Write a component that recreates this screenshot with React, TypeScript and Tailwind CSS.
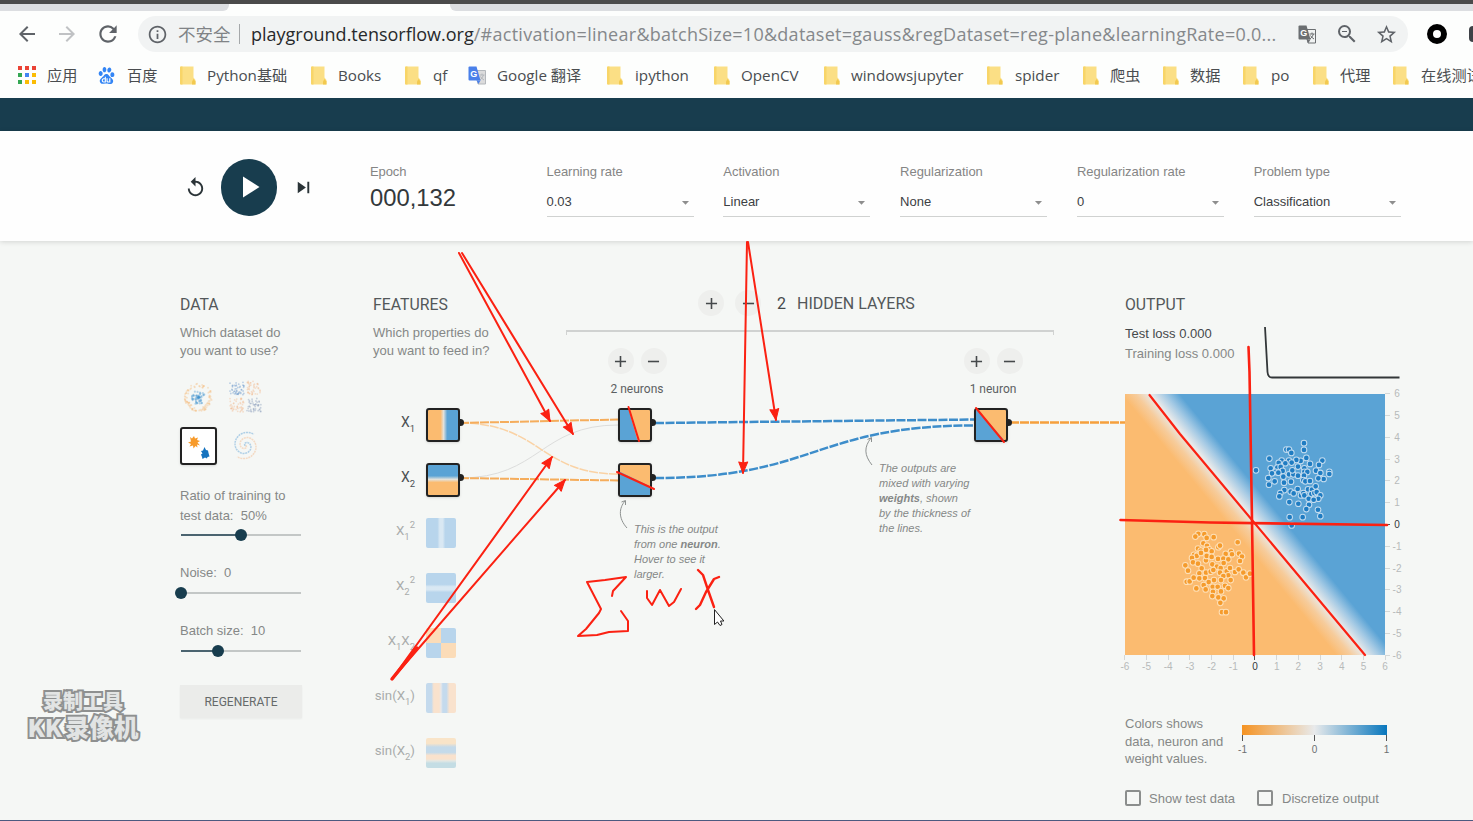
import type { ReactNode } from 'react'
import {
  MdAdd,
  MdArrowBack,
  MdArrowDropDown,
  MdArrowForward,
  MdInfoOutline,
  MdPlayArrow,
  MdRefresh,
  MdRemove,
  MdReplay,
  MdSkipNext,
  MdStarBorder,
  MdZoomOut,
} from 'react-icons/md'
import { SiBaidu } from 'react-icons/si'

const ORANGE = '#fbbb70'
const BLUE = '#5aa3d5'

/* ---------- browser chrome ---------- */

function AppsIcon() {
  const colors = ['#ea4335', '#ea4335', '#ea4335', '#34a853', '#4285f4', '#fbbc04', '#34a853', '#fbbc04', '#fbbc04']
  return (
    <span className="grid grid-cols-3 gap-[3px] w-[18px]">
      {colors.map((c, i) => (
        <span key={i} className="h-1 w-1" style={{ backgroundColor: c }} />
      ))}
    </span>
  )
}

function FolderIcon() {
  return (
    <svg width="16" height="19" viewBox="0 0 16 19">
      <path d="M0 1.5Q0 .5 1 .5h12.500v11l2 2.500v4.500H1q-1 0-1-1z" fill="#fbdf85" />
      <path d="M0 1.500Q0 .5 1 .5h1.500V18.500H1q-1 0-1-1z" fill="#f8d568" />
      <path d="M12 18.500v-3l1.500-2.500 2 2.500v3z" fill="#f2c94f" />
    </svg>
  )
}

function TranslateIcon({ back, page, ink }: { back: string; page: string; ink: string }) {
  return (
    <svg className="shrink-0" width="19" height="19" viewBox="0 0 19 19">
      <path d="M7 4.500h10.500v13.500H10z" fill={page} stroke={ink} strokeWidth="1" />
      <path d="M11.500 9h5M14 7.500V9M15.500 9q-1 3-3.500 5M12.500 10.500q1 2 3.500 3.500" stroke={ink} strokeWidth="1" fill="none" />
      <path d="M1.500.5h7l4 14H1.500q-1 0-1-1v-12q0-1 1-1z" fill={back} />
      <path d="M8.500 14.500h4l-2 3.500z" fill={back} />
      <text x="2.300" y="10.500" fontSize="9" fontWeight="700" fill="#fff" fontFamily="Liberation Sans, sans-serif">
        G
      </text>
    </svg>
  )
}

const bookmarks = [
  { label: '应用', icon: 'apps', w: 'w-[80px]', gap: 'w-[29px]' },
  { label: '百度', icon: 'baidu', w: 'w-[82px]', gap: 'w-[29px]' },
  { label: 'Python基础', icon: 'folder', w: 'w-[131px]', gap: 'w-[27px]' },
  { label: 'Books', icon: 'folder', w: 'w-[94px]', gap: 'w-[27px]' },
  { label: 'qf', icon: 'folder', w: 'w-[63px]', gap: 'w-[28px]' },
  { label: 'Google 翻译', icon: 'translate', w: 'w-[139px]', gap: 'w-[29px]' },
  { label: 'ipython', icon: 'folder', w: 'w-[107px]', gap: 'w-[28px]' },
  { label: 'OpenCV', icon: 'folder', w: 'w-[110px]', gap: 'w-[27px]' },
  { label: 'windowsjupyter', icon: 'folder', w: 'w-[163px]', gap: 'w-[27px]' },
  { label: 'spider', icon: 'folder', w: 'w-[96px]', gap: 'w-[28px]' },
  { label: '爬虫', icon: 'folder', w: 'w-[80px]', gap: 'w-[27px]' },
  { label: '数据', icon: 'folder', w: 'w-[80px]', gap: 'w-[27px]' },
  { label: 'po', icon: 'folder', w: 'w-[70px]', gap: 'w-[28px]' },
  { label: '代理', icon: 'folder', w: 'w-[80px]', gap: 'w-[27px]' },
  { label: '在线测试', icon: 'folder', w: 'w-[100px]', gap: 'w-[28px]' },
]

function BookmarkIcon({ icon }: { icon: string }) {
  if (icon === 'apps') return <AppsIcon />
  if (icon === 'baidu') return <SiBaidu className="h-[17px] w-[17px] text-[#3385f5]" />
  if (icon === 'translate') return <TranslateIcon back="#4a80ea" page="#dcdcdc" ink="#b4b8bc" />
  return <FolderIcon />
}

function BrowserChrome() {
  return (
    <header className="h-[98px] bg-[#fdfefd] font-['Open_Sans','Noto_Sans_CJK_SC',sans-serif]">
      <div className="h-1 bg-[#4b4b4b]" />
      <div className="flex h-[7px] justify-between bg-[#fdfefd]">
        <div className="w-[229px] rounded-br-md bg-[#dcdee1]" />
        <div className="w-[1023px] rounded-bl-md bg-[#dcdee1]" />
      </div>
      <div className="flex h-[46px] items-center pl-[15px]">
        <MdArrowBack className="h-6 w-6 shrink-0 text-[#5f6368]" />
        <MdArrowForward className="ml-4 h-6 w-6 shrink-0 text-[#c0c2c4]" />
        <MdRefresh className="ml-4 h-[26px] w-[26px] shrink-0 text-[#5f6368]" />
        <div className="ml-[17px] flex h-9 w-[1270px] shrink-0 items-center rounded-full bg-[#f1f3f3] pl-[9px] whitespace-nowrap">
          <MdInfoOutline className="h-[21px] w-[21px] shrink-0 text-[#5f6368]" />
          <span className="ml-[10px] w-[53px] shrink-0 text-[17.500px] text-[#808386]">不安全</span>
          <span className="ml-[8px] h-5 w-px shrink-0 bg-[#a5a8aa]" />
          <span className="ml-[11px] w-[1047px] shrink-0 text-[18px] tracking-[0.270px] text-[#85888b]">
            <span className="tracking-normal text-[#27292b]">playground.tensorflow.org</span>
            /#activation=linear&amp;batchSize=10&amp;dataset=gauss&amp;regDataset=reg-plane&amp;learningRate=0.0...
          </span>
          <TranslateIcon back="#6b6e71" page="#f1f3f3" ink="#6b6e71" />
          <MdZoomOut className="ml-[18px] h-6 w-6 shrink-0 text-[#5f6368]" />
          <MdStarBorder className="ml-4 h-[23px] w-[23px] shrink-0 text-[#5f6368]" />
        </div>
        <div className="ml-[19px] h-5 w-5 shrink-0 rounded-full border-[6px] border-black" />
        <div className="ml-[22px] h-4 w-4 shrink-0 rounded-sm bg-[#3e4247]" />
      </div>
      <nav className="flex h-[37px] items-center pl-[18px] text-[15.200px] whitespace-nowrap text-[#4a4d50]">
        {bookmarks.map(b => (
          <div key={b.label} className={`flex shrink-0 items-center ${b.w}`}>
            <span className={`flex shrink-0 ${b.gap}`}>
              <BookmarkIcon icon={b.icon} />
            </span>
            <span>{b.label}</span>
          </div>
        ))}
      </nav>
    </header>
  )
}

/* ---------- top controls ---------- */

const selects = [
  { label: 'Learning rate', value: '0.03' },
  { label: 'Activation', value: 'Linear' },
  { label: 'Regularization', value: 'None' },
  { label: 'Regularization rate', value: '0' },
  { label: 'Problem type', value: 'Classification' },
]

function TopControls() {
  return (
    <section className="relative z-10 flex h-[110px] bg-[#fefefe] shadow-[0_1px_5px_rgba(0,0,0,0.14)]">
      <div className="flex h-[112px] w-[370px] items-center pl-[184px]">
        <MdReplay className="h-[23px] w-[23px] text-[#2b3438]" />
        <div className="ml-[14px] flex h-[57px] w-14 items-center justify-center rounded-full bg-[#183d4e]">
          <MdPlayArrow className="h-9 w-9 text-white" />
        </div>
        <MdSkipNext className="ml-[15px] h-[23px] w-[23px] text-[#2b3438]" />
      </div>
      <div className="w-[176.500px] pt-[32px]">
        <div className="text-[13px] leading-[18px] tracking-[-0.100px] text-[#858585]">Epoch</div>
        <div className="mt-[2px] text-[23.800px] leading-[30px] text-[#33383b]">000,132</div>
      </div>
      <div className="flex gap-[29.800px] pt-[32px]">
        {selects.map(s => (
          <div key={s.label} className="w-[147px]">
            <div className="text-[13px] leading-[18px] tracking-[-0.030px] whitespace-nowrap text-[#858585]">{s.label}</div>
            <div className="mt-[4px] flex h-[32px] items-center justify-between border-b border-[#d0d2d1] pt-[3px] text-[13px] text-[#3c4043]">
              {s.value}
              <MdArrowDropDown className="h-[17px] w-[17px] text-[#8e8e8e]" />
            </div>
          </div>
        ))}
      </div>
    </section>
  )
}

/* ---------- data column ---------- */

const noise = (i: number) => {
  const n = Math.sin(i * 12.9898) * 43758.5453
  return n - Math.floor(n)
}

function ringDots(n: number, min: number, max: number) {
  return Array.from({ length: n }, (_, i) => {
    const a = noise(i + 1) * Math.PI * 2
    const d = min + noise(i + 101) * (max - min)
    return [18.500 + Math.cos(a) * d, 18.500 + Math.sin(a) * d]
  })
}

function CircleThumb() {
  return (
    <svg width="37" height="37">
      {ringDots(90, 10.500, 14).map(([x, y], i) => (
        <circle key={i} cx={x} cy={y} r="1" fill="#f5b26b" opacity="0.3" />
      ))}
      {ringDots(60, 0, 7).map(([x, y], i) => (
        <circle key={i} cx={x} cy={y} r="1.100" fill="#3f92cf" opacity="0.35" />
      ))}
    </svg>
  )
}

function XorThumb() {
  const quads = [
    { x: 3, y: 2, fill: '#5b8fc9' },
    { x: 20, y: 2, fill: '#f3b58a' },
    { x: 3, y: 19, fill: '#f3b58a' },
    { x: 20, y: 19, fill: '#7f93b5' },
  ]
  return (
    <svg width="37" height="37">
      {quads.map((q, k) =>
        Array.from({ length: 45 }, (_, i) => (
          <circle
            key={`${k}-${i}`}
            cx={q.x + noise(i + k * 60) * 14}
            cy={q.y + noise(i + k * 60 + 300) * 14}
            r="0.900"
            fill={q.fill}
            opacity="0.38"
          />
        )),
      )}
    </svg>
  )
}

function GaussThumb() {
  return (
    <svg width="33" height="33" viewBox="0 0 33 33">
      <path
        d="M8 7l2 1.500L12 6l1 2.500 3-1-1 2.500 3 1-2.500 1.500 2.500 3-3-1 .5 3-2-1.500-2 2.500-.5-3-3.500 1 1.500-2.500-3-1.500 3-1z"
        fill="#f79a2a"
      />
      <path d="M22.500 17l1.500 3 2 .5.5 2.500 1 3.500-2 .5-.5 1.500-2-1-2.500 1.500-.5-2-1-2.500 1.500-1-1.500-2.500 2-.5z" fill="#1673bf" />
    </svg>
  )
}

function SpiralThumb() {
  const arm = (phase: number) =>
    Array.from({ length: 60 }, (_, i) => {
      const t = i / 59
      const a = t * 8.500 + phase
      return `${(18.500 + Math.cos(a) * t * 14).toFixed(1)},${(18.500 + Math.sin(a) * t * 14).toFixed(1)}`
    }).join(' ')
  return (
    <svg width="37" height="37">
      <polyline points={arm(0)} fill="none" stroke="#f5b98a" strokeWidth="1.500" strokeDasharray="2 0.700" opacity="0.45" />
      <polyline points={arm(Math.PI)} fill="none" stroke="#5b9fd4" strokeWidth="1.500" strokeDasharray="2 0.700" opacity="0.45" />
    </svg>
  )
}

function Slider({ value }: { value: number }) {
  return (
    <div className="relative left-[0.500px] flex h-3 w-[120px] items-center">
      <div className="h-[2px] w-full bg-[#c3c7c6]" />
      <div className="absolute left-0 h-[2px] bg-[#4b6470]" style={{ width: `${value}%` }} />
      <div className="absolute h-3 w-3 -translate-x-1/2 rounded-full bg-[#183d4e]" style={{ left: `${value}%` }} />
    </div>
  )
}

function ColumnTitle({ children }: { children: ReactNode }) {
  return <h4 className="font-[Roboto] text-[15.800px] leading-5 text-[#53585a]">{children}</h4>
}

function DataColumn() {
  return (
    <div className="w-[193px] shrink-0 pt-[54px] text-[13px] text-[#858887]">
      <ColumnTitle>DATA</ColumnTitle>
      <p className="mt-[9px] leading-[17.500px]">
        Which dataset do
        <br />
        you want to use?
      </p>
      <div className="mt-[20px] grid w-[84px] grid-cols-2 gap-x-[10px] gap-y-[11px]">
        <CircleThumb />
        <XorThumb />
        <div className="flex h-[38px] w-[37px] items-center justify-center rounded-[3px] border-2 border-[#222] bg-white shadow-sm">
          <GaussThumb />
        </div>
        <SpiralThumb />
      </div>
      <div className="mt-[21px] leading-5">
        Ratio of training to
        <br />
        test data: &nbsp;50%
      </div>
      <div className="mt-[3px]">
        <Slider value={50} />
      </div>
      <div className="mt-[22px] leading-5">Noise: &nbsp;0</div>
      <div className="mt-[4px]">
        <Slider value={0} />
      </div>
      <div className="mt-[22px] leading-5">Batch size: &nbsp;10</div>
      <div className="mt-[4px]">
        <Slider value={31} />
      </div>
      <button className="mt-[28px] h-[33px] w-[122px] bg-[#ebecea] font-[Roboto] text-[12px] text-[#666a6a] shadow-[0_1px_2px_rgba(0,0,0,0.05)]">
        REGENERATE
      </button>
    </div>
  )
}

/* ---------- features ---------- */

interface Feature {
  label: ReactNode
  fill: string
  active?: boolean
}

function Sub({ children }: { children: ReactNode }) {
  return <sub className="bottom-[-5px] text-[9.500px]">{children}</sub>
}

function Sup({ children }: { children: ReactNode }) {
  return <sup className="top-[-7px] text-[9.500px]">{children}</sup>
}

const features: Feature[] = [
  { label: <>X<Sub>1</Sub></>, fill: 'bg-[linear-gradient(90deg,#fbbb70_42%,#e3e2dc_52%,#5aa3d5_64%)]', active: true },
  { label: <>X<Sub>2</Sub></>, fill: 'bg-[linear-gradient(180deg,#5aa3d5_36%,#e3e2dc_48%,#fbbb70_58%)]', active: true },
  { label: <>X<Sub>1</Sub><Sup>2</Sup></>, fill: 'bg-[linear-gradient(90deg,#b8d5ec_38%,#d9e8f3_46%,#d9e8f3_56%,#b8d5ec_64%)]' },
  { label: <>X<Sub>2</Sub><Sup>2</Sup></>, fill: 'bg-[linear-gradient(180deg,#b8d5ec_38%,#d9e8f3_46%,#d9e8f3_56%,#b8d5ec_64%)]' },
  { label: <>X<Sub>1</Sub>X<Sub>2</Sub></>, fill: 'bg-[conic-gradient(#b8d5ec_25%,#fbdcb8_25%_50%,#b8d5ec_50%_75%,#fbdcb8_75%)]' },
  {
    label: <>sin(X<Sub>1</Sub>)</>,
    fill: 'bg-[linear-gradient(90deg,#c4daed_18%,#f9e2cd_26%,#f9e2cd_44%,#e8e8ea_50%,#c4daed_56%,#c4daed_68%,#f9e2cd_78%)]',
  },
  {
    label: <>sin(X<Sub>2</Sub>)</>,
    fill: 'bg-[linear-gradient(180deg,#f9e4c8_18%,#c4daea_30%,#c4daea_48%,#f9e2cd_58%,#f9e2cd_70%,#e4e8e4_76%,#c4dde4_84%)]',
  },
]

function FeaturesColumn() {
  return (
    <div className="w-[193px] shrink-0 pt-[54px] text-[13px] text-[#858887]">
      <ColumnTitle>FEATURES</ColumnTitle>
      <p className="mt-[9px] leading-[17.500px] whitespace-nowrap">
        Which properties do
        <br />
        you want to feed in?
      </p>
      <div className="mt-[38px]">
        {features.map((f, i) => (
          <div key={i} className={`flex h-[55px] items-center ${f.active ? '' : 'pb-[4px]'}`}>
            <span
              className={`w-[43px] pr-px pb-[4px] text-right font-[Roboto] whitespace-nowrap ${f.active ? 'text-[14px] text-[#4b5053]' : 'text-[13.300px] text-[#a9acab]'}`}
            >
              {f.label}
            </span>
            {f.active ? (
              <span className={`relative ml-[10px] h-[34px] w-[34px] rounded-[3px] border-2 border-[#222] shadow ${f.fill}`}>
                <span className="absolute top-[9px] -right-[6px] h-[7px] w-[4px] rounded-r-full bg-[#222]" />
              </span>
            ) : (
              <span className={`ml-[10px] h-[30px] w-[30px] rounded-[2px] ${f.fill}`} />
            )}
          </div>
        ))}
      </div>
    </div>
  )
}

/* ---------- hidden layers ---------- */

function RoundButton({ children }: { children: ReactNode }) {
  return <span className="flex h-[26px] w-[26px] items-center justify-center rounded-full bg-[#eeefed] text-[#45494b]">{children}</span>
}

function Neuron({ split }: { split: string }) {
  return (
    <div className="relative h-[34px] w-[34px] rounded-[3px] border-2 border-[#222] bg-[#fbbb70] shadow">
      <svg width="30" height="30" viewBox="0 0 31 31">
        <path d={split} fill={BLUE} />
      </svg>
      <span className="absolute top-[9px] -right-[6px] h-[7px] w-[4px] rounded-r-full bg-[#222]" />
    </div>
  )
}

const layers = [
  { label: '2 neurons', splits: ['M0 0H9L18 31H0z', 'M0 7L31 22V31H0z'] },
  { label: '1 neuron', splits: ['M2 0L29 31H0V0z'] },
]

function HiddenLayers() {
  return (
    <div className="relative z-10 w-[559px] shrink-0 pt-[49px]">
      <div className="flex h-[26px] items-center pl-[132px]">
        <RoundButton>
          <MdAdd className="h-[19px] w-[19px]" />
        </RoundButton>
        <span className="ml-[11px]">
          <RoundButton>
            <MdRemove className="h-[19px] w-[19px]" />
          </RoundButton>
        </span>
        <span className="ml-[16px] w-5 pt-[2px] font-[Roboto] text-[16px] text-[#45494b]">2</span>
        <span className="pt-[2px] font-[Roboto] text-[16px] text-[#53585a]">HIDDEN LAYERS</span>
      </div>
      <div className="mt-[14px] h-[5px] w-[488px] border-x border-t-2 border-[#d0d2d1]" />
      <div className="flex w-[488px] justify-between pt-[13px] pr-[31px] pl-[41px]">
        {layers.map(layer => (
          <div key={layer.label} className="flex w-[60px] flex-col items-center">
            <div className="flex gap-[7px]">
              <RoundButton>
                <MdAdd className="h-[19px] w-[19px]" />
              </RoundButton>
              <RoundButton>
                <MdRemove className="h-[19px] w-[19px]" />
              </RoundButton>
            </div>
            <div className="mt-[6px] font-[Roboto] text-[12px] leading-[18px] whitespace-nowrap text-[#5c6062]">{layer.label}</div>
            <div className="mt-[10px] flex flex-col gap-[21px] pr-[4px]">
              {layer.splits.map(s => (
                <Neuron key={s} split={s} />
              ))}
            </div>
          </div>
        ))}
      </div>
      <p className="absolute top-[281px] left-[68px] text-[11px] leading-[15px] whitespace-nowrap text-[#858887] italic">
        This is the output
        <br />
        from one <b>neuron</b>.
        <br />
        Hover to see it
        <br />
        larger.
      </p>
      <p className="absolute top-[220px] left-[313px] text-[11px] leading-[15px] whitespace-nowrap text-[#858887] italic">
        The outputs are
        <br />
        mixed with varying
        <br />
        <b>weights</b>, shown
        <br />
        by the thickness of
        <br />
        the lines.
      </p>
    </div>
  )
}

// Weighted connections between the nodes, in page pixels relative to the work area
function Links() {
  return (
    <svg className="pointer-events-none absolute inset-0" width="1473" height="580" viewBox="0 241 1473 580" fill="none">
      <path d="M460 478C540 478 540 425 618 425" stroke="#dcdddc" strokeWidth="1" />
      <path d="M460 423C540 423 540 474 618 474" stroke="#fad2a4" strokeWidth="1.500" strokeDasharray="9 1" />
      <path d="M460 423L618 419.500" stroke="#f5ad5c" strokeWidth="2" strokeDasharray="9 1" />
      <path d="M460 478L618 480.500" stroke="#f5ad5c" strokeWidth="2" strokeDasharray="9 1" />
      <path d="M655 423L974 419.500" stroke="#3d8dca" strokeWidth="2.500" strokeDasharray="9 1.500" />
      <path d="M655 478C815 478 815 425.500 974 425.500" stroke="#3d8dca" strokeWidth="2.500" strokeDasharray="9 1.500" />
      <path d="M1010 422.500H1125" stroke="#f5a03c" strokeWidth="2.500" strokeDasharray="9 1" />
      <path d="M627 528C618 518 619 508 625 501M621.500 502l4-1.500v4.500" stroke="#8d9190" />
      <path d="M872 465C864 455 864 447 871 438M867.500 439.500l4-2v4.500" stroke="#8d9190" />
    </svg>
  )
}

/* ---------- output ---------- */

// Sample points, three units per plotted pixel
const bluePoints = [
  [582, 491], [582, 511], [529, 510], [537, 510], [544, 520], [478, 537], [438, 572], [589, 535], [572, 544], [559, 541],
  [515, 543], [537, 543], [526, 551], [545, 549], [600, 553], [564, 561], [506, 550], [502, 564], [512, 562], [482, 566],
  [496, 577], [518, 574], [486, 581], [505, 579], [583, 566], [583, 577], [592, 577], [637, 543], [627, 556], [618, 573],
  [631, 580], [658, 577], [658, 583], [641, 598], [625, 596], [475, 595], [494, 605], [477, 615], [520, 591], [537, 584],
  [550, 584], [564, 588], [582, 588], [547, 572], [543, 606], [522, 609], [580, 601], [586, 605], [600, 604], [563, 628],
  [523, 631], [511, 640], [508, 650], [542, 636], [551, 641], [573, 647], [580, 640], [583, 647], [594, 629], [606, 630],
  [604, 643], [617, 620], [613, 640], [620, 637], [631, 647], [625, 657], [596, 657], [611, 660], [538, 667], [565, 672],
  [597, 675], [589, 688], [624, 690], [631, 709], [578, 712], [539, 712], [545, 737],
]

const orangePoints = [
  [265, 464], [283, 465], [256, 472], [290, 476], [311, 474], [383, 489], [280, 492], [291, 500], [264, 508], [272, 514],
  [297, 510], [305, 516], [325, 504], [330, 499], [288, 512], [363, 517], [366, 525], [347, 524], [387, 523], [396, 532],
  [390, 545], [252, 527], [260, 530], [273, 521], [246, 536], [249, 549], [264, 553], [288, 543], [290, 530], [305, 533],
  [324, 539], [340, 538], [355, 540], [341, 551], [307, 555], [321, 562], [332, 566], [226, 558], [234, 574], [275, 567],
  [288, 580], [268, 582], [302, 577], [310, 572], [330, 580], [350, 576], [360, 566], [355, 588], [340, 590], [375, 578],
  [386, 570], [400, 580], [408, 594], [420, 583], [230, 607], [239, 606], [251, 595], [268, 597], [285, 596], [312, 602],
  [333, 602], [362, 602], [296, 608], [281, 617], [308, 622], [323, 622], [345, 619], [259, 627], [287, 630], [309, 637],
  [333, 636], [355, 626], [307, 650], [325, 654], [341, 657], [331, 670], [336, 698], [348, 698],
]

const ticks = [-6, -5, -4, -3, -2, -1, 0, 1, 2, 3, 4, 5, 6]

function Heatmap() {
  return (
    <svg className="overflow-visible" width="260" height="261" viewBox="0 0 780 780" preserveAspectRatio="none">
      <defs>
        <linearGradient id="boundary" gradientUnits="userSpaceOnUse" x1="346" y1="432" x2="450" y2="346">
          <stop offset="0" stopColor={ORANGE} />
          <stop offset="0.25" stopColor="#f6cc9c" />
          <stop offset="0.5" stopColor="#e9eaea" />
          <stop offset="0.75" stopColor="#a3c9e4" />
          <stop offset="1" stopColor={BLUE} />
        </linearGradient>
      </defs>
      <rect width="780" height="780" fill="url(#boundary)" />
      <g transform="translate(-45 -344)" fill="#1f7cc2" stroke="#c3dcef" strokeWidth="3">
        {bluePoints.map(([x, y], i) => (
          <circle key={i} cx={x} cy={y} r="8.500" />
        ))}
      </g>
      <g transform="translate(-45 -46)" fill="#f59b2c" stroke="#fde0b8" strokeWidth="3">
        {orangePoints.map(([x, y], i) => (
          <circle key={i} cx={x} cy={y} r="8.500" />
        ))}
      </g>
    </svg>
  )
}

function OutputColumn() {
  return (
    <div className="w-[300px] shrink-0 pt-[54px] text-[13px] text-[#858887]">
      <ColumnTitle>OUTPUT</ColumnTitle>
      <div className="flex h-[79px] justify-between pr-[25px] whitespace-nowrap">
        <div className="pt-[9px] leading-5">
          <div className="text-[#45494b]">Test loss 0.000</div>
          <div>Training loss 0.000</div>
        </div>
        <svg className="mt-[11px]" width="136" height="54" fill="none">
          <path d="M1 1L3.500 46Q4 51.500 8 51.500H135.500" stroke="#333739" strokeWidth="1.800" />
        </svg>
      </div>
      <div className="flex h-[261px] text-[10px] text-[#b7baba]">
        <Heatmap />
        <div className="-my-[11px] flex flex-col-reverse justify-between">
          {ticks.map(t => (
            <div key={t} className={`flex h-[22px] items-center ${t === 0 ? 'text-[#33383b]' : ''}`}>
              <span className={`h-px w-[5px] ${t === 0 ? 'bg-[#555]' : 'bg-[#d5d7d6]'}`} />
              <span className="w-[14px] text-center">{t}</span>
            </div>
          ))}
        </div>
      </div>
      <div className="-ml-[11px] flex w-[282px] justify-between text-[10px] text-[#b7baba]">
        {ticks.map(t => (
          <div key={t} className={`flex w-[22px] flex-col items-center ${t === 0 ? 'text-[#33383b]' : ''}`}>
            <span className={`h-[5px] w-px ${t === 0 ? 'bg-[#555]' : 'bg-[#d5d7d6]'}`} />
            <span className="leading-[14px]">{t}</span>
          </div>
        ))}
      </div>
      <div className="mt-[41px] flex">
        <p className="w-[114px] leading-[17.500px] whitespace-nowrap">
          Colors shows
          <br />
          data, neuron and
          <br />
          weight values.
        </p>
        <div className="ml-[3px] w-[145px] pt-[10px]">
          <div className="h-[10px] bg-[linear-gradient(90deg,#f59322,#e8eaeb_50%,#0877bd)]" />
          <div className="flex justify-between text-[10px] text-[#6c7071]">
            {['-1', '0', '1'].map(v => (
              <div key={v} className="flex w-px flex-col items-center">
                <span className="h-[6px] w-px bg-[#555]" />
                <span className="mt-[2px] leading-[14px]">{v}</span>
              </div>
            ))}
          </div>
        </div>
      </div>
      <div className="mt-[21px] flex items-center whitespace-nowrap">
        <span className="h-4 w-4 rounded-[2px] border-2 border-[#8b8e8d]" />
        <span className="ml-[8px] w-[108px]">Show test data</span>
        <span className="h-4 w-4 rounded-[2px] border-2 border-[#8b8e8d]" />
        <span className="ml-[9px]">Discretize output</span>
      </div>
    </div>
  )
}

/* ---------- pen strokes drawn over the page ---------- */

const arrows = [
  [459, 253, 550, 421],
  [462, 253, 573, 434],
  [747, 242, 743, 473],
  [748, 242, 776, 420],
  [392, 679, 552, 457],
  [392, 679, 565, 480],
]

function Annotations() {
  return (
    <svg
      className="pointer-events-none absolute inset-0 z-20"
      width="1473"
      height="821"
      fill="none"
      stroke="#fb2112"
      strokeWidth="2"
      strokeLinecap="round"
      strokeLinejoin="round"
    >
      {arrows.map(([x1, y1, x2, y2], i) => {
        const angle = (Math.atan2(y2 - y1, x2 - x1) * 180) / Math.PI
        return (
          <g key={i}>
            <path d={`M${x1} ${y1}L${x2} ${y2}`} />
            <path d="M0 0L-11 -4.500L-10 0L-11 4.500z" fill="#fb2112" strokeWidth="1" transform={`translate(${x2} ${y2}) rotate(${angle})`} />
          </g>
        )
      })}
      <path d="M392 679L417 648" strokeWidth="3.500" />
      <path d="M628.500 407L639 441" />
      <path d="M617 472L654 489" />
      <path d="M976 408L1004 442" />
      <path d="M1149.500 395L1180 434L1365 655" strokeWidth="2.200" />
      <path d="M1248.500 347L1249.500 372L1252 520L1254 655" strokeWidth="2.600" />
      <path d="M1120.500 520L1210 522.500L1387 525" strokeWidth="2.600" />
      <path d="M626 577L605 580L587 582L601 609L599 613L586 629L578 636L597 635L609 632L628 631L628 621L621 611M626 577L613 591L612 596" />
      <path d="M647 591L647 598L652 605L660 590L669 606L674 602L681 589" />
      <path d="M698 570L703 575L708 590L714 607M719 577L714 579L706 592L700 605L696 609" strokeWidth="2.400" />
      <path
        d="M714.500 610V624.500L717.500 622L720 625.500L722 624.500L720.500 621H723.500z"
        fill="#fff"
        stroke="#222"
        strokeWidth="1"
      />
    </svg>
  )
}

function Watermark() {
  return (
    <div className="absolute top-[688px] left-[20px] z-20 w-[126px] text-center font-['Noto_Sans_CJK_SC',sans-serif] font-black text-[#e2e4e4] [-webkit-text-stroke:4px_#8e9090] [paint-order:stroke_fill]">
      <div className="text-[20px] leading-[26px]">录制工具</div>
      <div className="text-[24.500px] leading-[25px] whitespace-nowrap">
        KK<span className="ml-[3px]">录像机</span>
      </div>
    </div>
  )
}

export default function App() {
  return (
    <div className="relative h-[821px] w-[1473px] overflow-hidden bg-[#f5f7f5] font-['Liberation_Sans',Arial,sans-serif]">
      <BrowserChrome />
      <div className="h-[33px] bg-[#183d4e]" />
      <TopControls />
      <main className="relative flex h-[579px] pl-[180px]">
        <Links />
        <DataColumn />
        <FeaturesColumn />
        <HiddenLayers />
        <OutputColumn />
      </main>
      <div className="h-px bg-[#4c5a80]" />
      <Watermark />
      <Annotations />
    </div>
  )
}
